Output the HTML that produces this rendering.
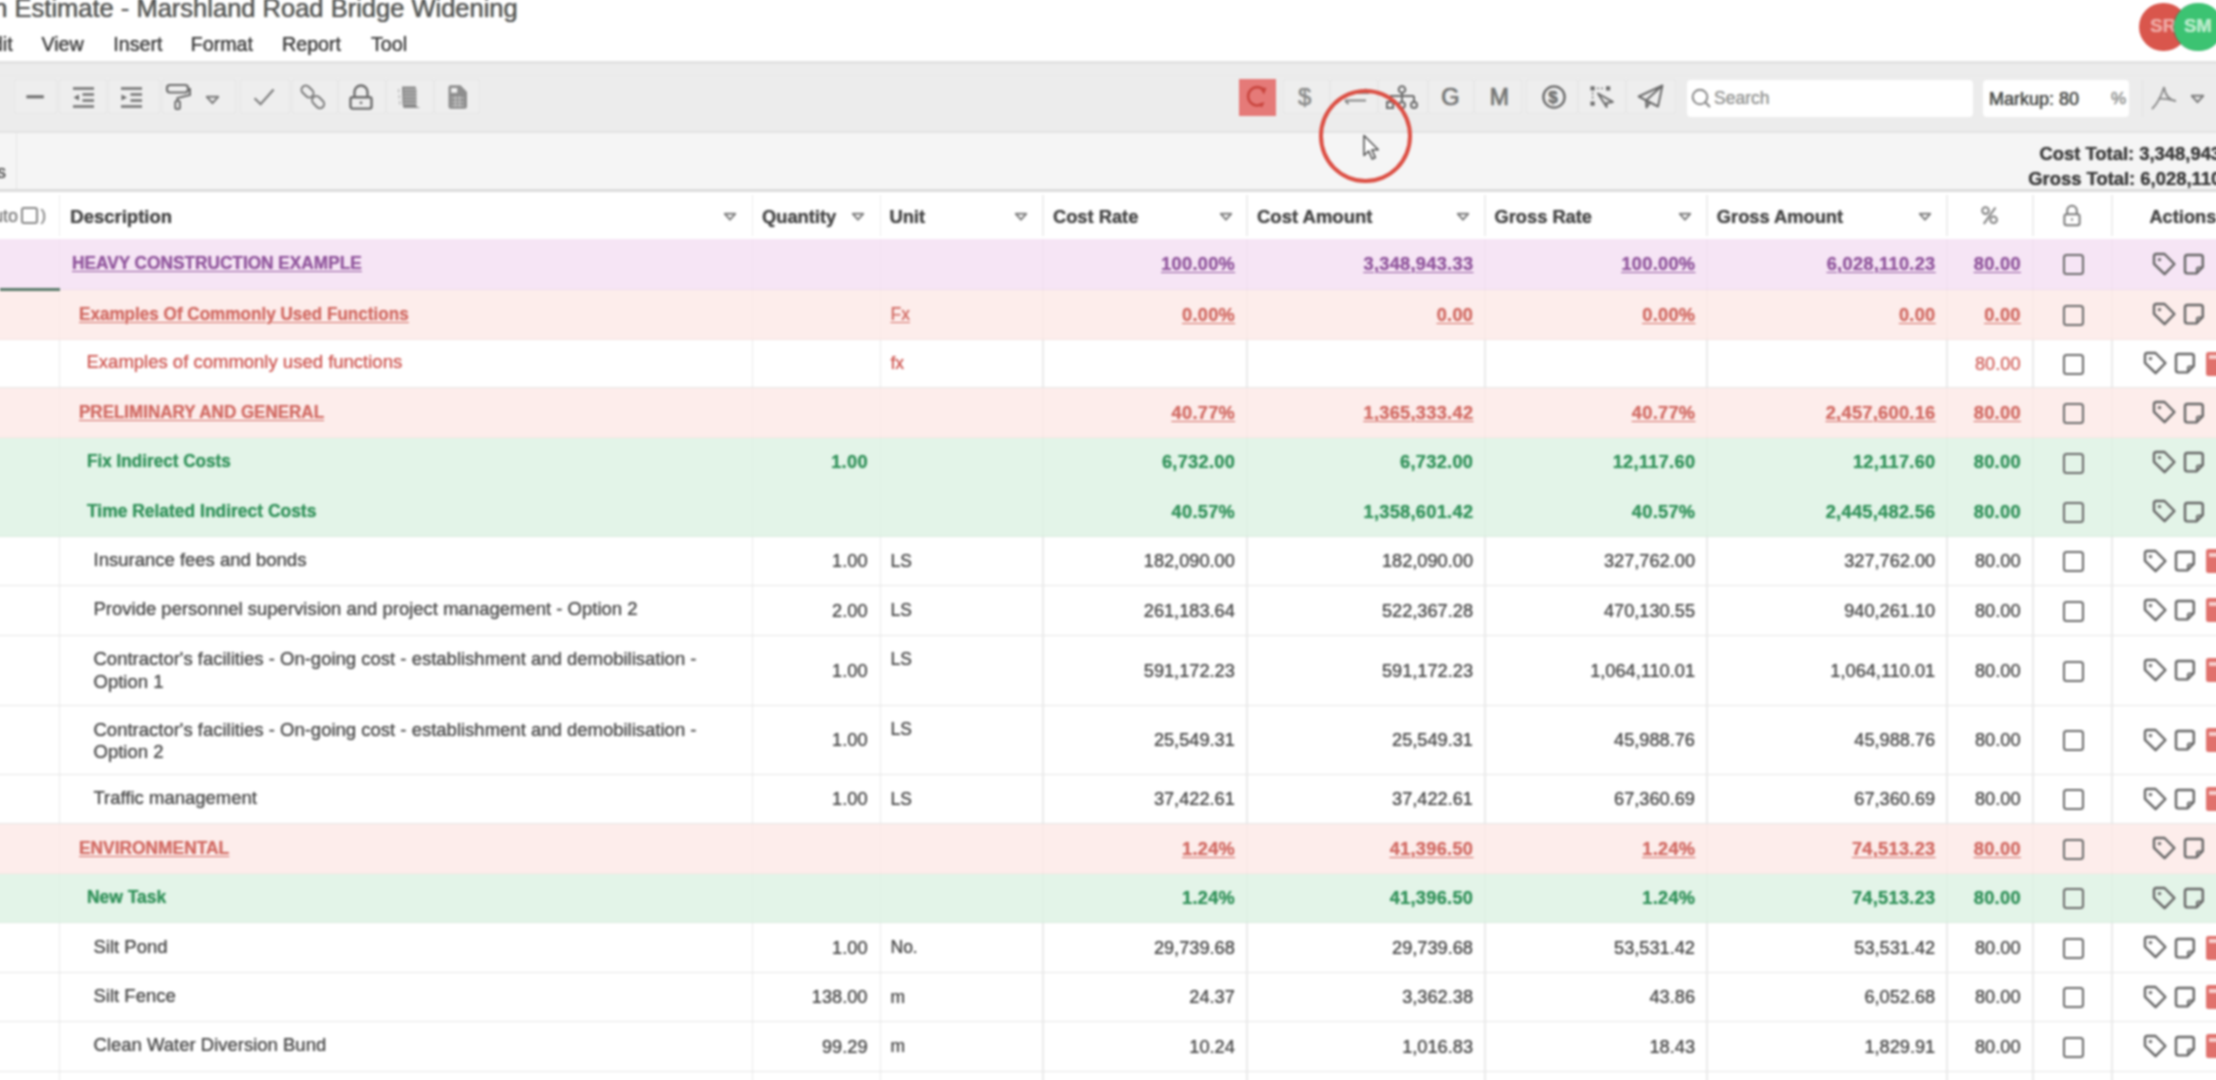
<!DOCTYPE html>
<html><head><meta charset="utf-8"><style>
html,body{margin:0;padding:0;background:#fff}
body{width:2216px;height:1080px;overflow:hidden;position:relative;font-family:"Liberation Sans", sans-serif}
#w{position:absolute;left:-14px;top:-14px;width:2244px;height:1108px;filter:blur(0.8px);background:#fff}
#c{position:absolute;left:14px;top:14px;width:2216px;height:1080px}
.t{position:absolute;white-space:nowrap;line-height:1;text-shadow:0 0 1px currentColor}
.r{position:absolute}
.s{position:absolute;overflow:visible}
</style></head><body><div id="w"><div id="c">
<div class="t" style="left:-6.70px;top:-3.69px;font-size:25.5px;color:#585858;">n Estimate - Marshland Road Bridge Widening</div>
<div class="t" style="left:-1187.40px;width:1200px;text-align:right;top:35.32px;font-size:19.7px;color:#3e3e3e;">Edit</div>
<div class="t" style="left:41.40px;top:35.32px;font-size:19.7px;color:#3e3e3e;">View</div>
<div class="t" style="left:113.30px;top:35.32px;font-size:19.7px;color:#3e3e3e;">Insert</div>
<div class="t" style="left:190.70px;top:35.32px;font-size:19.7px;color:#3e3e3e;">Format</div>
<div class="t" style="left:282.00px;top:35.32px;font-size:19.7px;color:#3e3e3e;">Report</div>
<div class="t" style="left:371.00px;top:35.32px;font-size:19.7px;color:#3e3e3e;">Tool</div>
<div class="r" style="left:2139.3px;top:2.7px;width:48.6px;height:48.6px;border-radius:50%;background:#d9564c"></div>
<div class="t" style="left:2150.30px;top:17.26px;font-size:18.5px;color:#eea9a3;font-weight:bold;">SR</div>
<div class="r" style="left:2174.3px;top:3px;width:48.4px;height:48.4px;border-radius:50%;background:#3cc372;box-shadow:-1px 0 0 rgba(60,60,60,0.35)"></div>
<div class="t" style="left:2183.90px;top:17.26px;font-size:18.5px;color:#b9ebca;font-weight:bold;">SM</div>
<div class="r" style="left:-14.00px;top:61.00px;width:2244.00px;height:72.00px;background:#ececec;"></div>
<div class="r" style="left:-14.00px;top:61.00px;width:2244.00px;height:3.00px;background:#e2e2e2;"></div>
<div class="r" style="left:-14.00px;top:74.50px;width:2244.00px;height:1.00px;background:#e8e8e8;"></div>
<div class="r" style="left:-14.00px;top:131.00px;width:2244.00px;height:2.00px;background:#e3e3e3;"></div>
<div class="r" style="left:-14.00px;top:133.00px;width:2244.00px;height:57.00px;background:#f5f5f5;"></div>
<div class="r" style="left:-14.00px;top:189.00px;width:2244.00px;height:3.00px;background:#dcdcdc;"></div>
<div class="r" style="left:15.50px;top:133.00px;width:1.50px;height:56.00px;background:#e6e6e6;"></div>
<div class="t" style="left:-3.00px;top:163.21px;font-size:18px;color:#555;">s</div>
<div class="t" style="left:2039.50px;top:145.21px;font-size:18.4px;color:#3a3a3a;font-weight:bold;">Cost Total: 3,348,943.33</div>
<div class="t" style="left:2028.30px;top:170.01px;font-size:18.4px;color:#3a3a3a;font-weight:bold;">Gross Total: 6,028,110.23</div>
<div class="r" style="left:14px;top:79px;width:43px;height:34.5px;border:1px solid #e7e7e7;background:#eeeeee;box-sizing:border-box;border-radius:3px"></div>
<div class="r" style="left:59px;top:79px;width:48px;height:34.5px;border:1px solid #e7e7e7;background:#eeeeee;box-sizing:border-box;border-radius:3px"></div>
<div class="r" style="left:108px;top:79px;width:52px;height:34.5px;border:1px solid #e7e7e7;background:#eeeeee;box-sizing:border-box;border-radius:3px"></div>
<div class="r" style="left:162px;top:79px;width:74px;height:34.5px;border:1px solid #e7e7e7;background:#eeeeee;box-sizing:border-box;border-radius:3px"></div>
<div class="r" style="left:240px;top:79px;width:50px;height:34.5px;border:1px solid #e7e7e7;background:#eeeeee;box-sizing:border-box;border-radius:3px"></div>
<div class="r" style="left:292px;top:79px;width:46px;height:34.5px;border:1px solid #e7e7e7;background:#eeeeee;box-sizing:border-box;border-radius:3px"></div>
<div class="r" style="left:338px;top:79px;width:48px;height:34.5px;border:1px solid #e7e7e7;background:#eeeeee;box-sizing:border-box;border-radius:3px"></div>
<div class="r" style="left:386px;top:79px;width:48px;height:34.5px;border:1px solid #e7e7e7;background:#eeeeee;box-sizing:border-box;border-radius:3px"></div>
<div class="r" style="left:434px;top:79px;width:46px;height:34.5px;border:1px solid #e7e7e7;background:#eeeeee;box-sizing:border-box;border-radius:3px"></div>
<div class="r" style="left:1283px;top:79px;width:47px;height:34.5px;border:1px solid #e7e7e7;background:#eeeeee;box-sizing:border-box;border-radius:3px"></div>
<div class="r" style="left:1330px;top:79px;width:48px;height:34.5px;border:1px solid #e7e7e7;background:#eeeeee;box-sizing:border-box;border-radius:3px"></div>
<div class="r" style="left:1378px;top:79px;width:50px;height:34.5px;border:1px solid #e7e7e7;background:#eeeeee;box-sizing:border-box;border-radius:3px"></div>
<div class="r" style="left:1428px;top:79px;width:46px;height:34.5px;border:1px solid #e7e7e7;background:#eeeeee;box-sizing:border-box;border-radius:3px"></div>
<div class="r" style="left:1474px;top:79px;width:48px;height:34.5px;border:1px solid #e7e7e7;background:#eeeeee;box-sizing:border-box;border-radius:3px"></div>
<div class="r" style="left:1526px;top:79px;width:52px;height:34.5px;border:1px solid #e7e7e7;background:#eeeeee;box-sizing:border-box;border-radius:3px"></div>
<div class="r" style="left:1578px;top:79px;width:48px;height:34.5px;border:1px solid #e7e7e7;background:#eeeeee;box-sizing:border-box;border-radius:3px"></div>
<div class="r" style="left:1626px;top:79px;width:50px;height:34.5px;border:1px solid #e7e7e7;background:#eeeeee;box-sizing:border-box;border-radius:3px"></div>
<svg class="s" style="left:20.00px;top:85.00px;" width="30" height="24" viewBox="0 0 30 24"><line x1="6.4" y1="11.8" x2="23.8" y2="11.8" stroke="#6c6c6c" stroke-width="3"/></svg>
<svg class="s" style="left:72.60px;top:85.50px;" width="22" height="23" viewBox="0 0 22 23"><line x1="0" y1="2.5" x2="21" y2="2.5" stroke="#6c6c6c" stroke-width="2.4"/><line x1="9.5" y1="8.5" x2="21" y2="8.5" stroke="#6c6c6c" stroke-width="2.4"/><line x1="9.5" y1="14.5" x2="21" y2="14.5" stroke="#6c6c6c" stroke-width="2.4"/><line x1="0" y1="20.5" x2="21" y2="20.5" stroke="#6c6c6c" stroke-width="2.4"/><path d="M6 8.5 L0.5 11.5 L6 14.5Z" fill="#6c6c6c"/></svg>
<svg class="s" style="left:120.70px;top:85.50px;" width="22" height="23" viewBox="0 0 22 23"><line x1="0" y1="2.5" x2="21" y2="2.5" stroke="#6c6c6c" stroke-width="2.4"/><line x1="9.5" y1="8.5" x2="21" y2="8.5" stroke="#6c6c6c" stroke-width="2.4"/><line x1="9.5" y1="14.5" x2="21" y2="14.5" stroke="#6c6c6c" stroke-width="2.4"/><line x1="0" y1="20.5" x2="21" y2="20.5" stroke="#6c6c6c" stroke-width="2.4"/><path d="M0.5 8.5 L6 11.5 L0.5 14.5Z" fill="#6c6c6c"/></svg>
<svg class="s" style="left:165.00px;top:83.00px;" width="28" height="28" viewBox="0 0 28 28"><rect x="2" y="2" width="21" height="7.5" rx="3" fill="none" stroke="#6c6c6c" stroke-width="2.2"/><path d="M23 6 H25 V12 L12.5 15 V18" fill="none" stroke="#6c6c6c" stroke-width="2"/><rect x="10.3" y="18" width="4.6" height="8" rx="1.5" fill="none" stroke="#6c6c6c" stroke-width="2"/></svg>
<svg class="s" style="left:204.80px;top:95.10px;" width="15" height="10" viewBox="0 0 15 10"><path d="M1.8 1.8 H13.2 L7.5 8.2Z" fill="none" stroke="#7a7a7a" stroke-width="2" stroke-linejoin="round"/></svg>
<svg class="s" style="left:250.00px;top:85.00px;" width="28" height="24" viewBox="0 0 28 24"><path d="M4.6 13.3 L10.6 19.2 L23.6 4.6" fill="none" stroke="#808080" stroke-width="2.3"/></svg>
<svg class="s" style="left:298.00px;top:83.00px;" width="30" height="28" viewBox="0 0 30 28"><g transform="rotate(-45 15 14)"><rect x="10.8" y="-0.5" width="8.4" height="13.5" rx="4.2" fill="none" stroke="#7e7e7e" stroke-width="2.1"/><rect x="10.8" y="14.5" width="8.4" height="13.5" rx="4.2" fill="none" stroke="#7e7e7e" stroke-width="2.1"/></g></svg>
<svg class="s" style="left:348.00px;top:83.00px;" width="26" height="28" viewBox="0 0 26 28"><path d="M6.5 14 V9 A6.5 6.5 0 0 1 19.5 9 V14" fill="none" stroke="#6c6c6c" stroke-width="2.4"/><rect x="2.5" y="14.3" width="21" height="11.3" rx="2" fill="none" stroke="#6c6c6c" stroke-width="2.4"/><circle cx="13" cy="19.8" r="1.4" fill="#6c6c6c"/></svg>
<svg class="s" style="left:395.00px;top:84.00px;" width="28" height="26" viewBox="0 0 28 26"><path d="M7 2.5 H20.5 L21.5 6 V22.5 L25.5 24 H8.5 L7.5 20 Z" fill="#8c8c8c"/><rect x="9" y="5.3" width="13" height="0.9" fill="#d0d0d0"/><rect x="9" y="8.7" width="13" height="0.9" fill="#d0d0d0"/><rect x="9" y="12.1" width="13" height="0.9" fill="#d0d0d0"/><rect x="9" y="15.5" width="13" height="0.9" fill="#d0d0d0"/><rect x="9" y="18.9" width="13" height="0.9" fill="#d0d0d0"/><rect x="3" y="5" width="1.3" height="3.5" fill="#b5b5b5"/><rect x="3.6" y="11" width="1.3" height="3.5" fill="#b5b5b5"/><rect x="4" y="17" width="1.3" height="3.5" fill="#b5b5b5"/></svg>
<svg class="s" style="left:447.00px;top:84.00px;" width="22" height="26" viewBox="0 0 22 26"><path d="M1.5 3.5 Q1.5 1.3 3.7 1.3 H13.5 L20 8 V22.5 Q20 24.8 17.8 24.8 H3.7 Q1.5 24.8 1.5 22.5Z" fill="#8e8e8e"/><rect x="4.2" y="4" width="6" height="4.8" fill="#f0f0f0"/><path d="M4.5 14 H17 M4.5 18 H17 M4.5 21.5 H17 M8.5 12 V23 M12.5 12 V23" stroke="#c8c8c8" stroke-width="1.1"/></svg>
<div class="r" style="left:1239.00px;top:78.80px;width:36.60px;height:37.00px;background:#e57a78;"></div>
<svg class="s" style="left:1244.00px;top:84.00px;" width="28" height="27" viewBox="0 0 28 27"><path d="M19.5 5.5 A9.2 9.2 0 1 0 19 19.5" fill="none" stroke="#c9463f" stroke-width="2.6"/><path d="M15 3 L22.5 4 L20 10.5Z" fill="#c9463f"/><path d="M14 20 L20.5 18 L18 23.5Z" fill="#c9463f"/></svg>
<div class="t" style="left:1298.00px;top:84.78px;font-size:24px;color:#8a8a8a;">$</div>
<svg class="s" style="left:1338.00px;top:84.00px;" width="34" height="26" viewBox="0 0 34 26"><path d="M10 9 H31 M27 5 L31 9" fill="none" stroke="#858585" stroke-width="2"/><path d="M28 16.5 H7 M10.5 20 L7 16.5" fill="none" stroke="#858585" stroke-width="2"/></svg>
<svg class="s" style="left:1385.00px;top:83.00px;" width="34" height="28" viewBox="0 0 34 28"><circle cx="17" cy="6.5" r="3.3" fill="none" stroke="#6c6c6c" stroke-width="2"/><path d="M17 10 V17 M5 13 H29 M5 13 V19 M29 13 V19 M17 13 V19" fill="none" stroke="#6c6c6c" stroke-width="2"/><rect x="2" y="19" width="6" height="6" fill="none" stroke="#6c6c6c" stroke-width="2"/><circle cx="17" cy="22" r="3" fill="none" stroke="#6c6c6c" stroke-width="2"/><circle cx="29" cy="22" r="3" fill="none" stroke="#6c6c6c" stroke-width="2"/></svg>
<div class="t" style="left:1441.30px;top:85.52px;font-size:23.5px;color:#777;-webkit-text-stroke:0.5px #777;">G</div>
<div class="t" style="left:1489.80px;top:85.76px;font-size:23px;color:#777;-webkit-text-stroke:0.5px #777;">M</div>
<svg class="s" style="left:1540.00px;top:83.00px;" width="28" height="28" viewBox="0 0 28 28"><circle cx="14" cy="14" r="10.6" fill="none" stroke="#6c6c6c" stroke-width="2.4"/></svg>
<div class="t" style="left:1548.20px;top:88.50px;font-size:17px;color:#6e6e6e;font-weight:bold;">$</div>
<svg class="s" style="left:1587.00px;top:83.00px;" width="30" height="28" viewBox="0 0 30 28"><rect x="3.5" y="3.3" width="4.2" height="4.2" fill="#6c6c6c"/><rect x="19" y="3.3" width="4.2" height="4.2" fill="#6c6c6c"/><rect x="3.5" y="18.5" width="4.2" height="4.2" fill="#6c6c6c"/><path d="M10 5.4 H17 M5.6 9.5 V16.5" stroke="#6c6c6c" stroke-width="1.3" stroke-dasharray="2 2"/><path d="M11 10.5 L25.8 18.9 L19.5 19.9 L19.6 24 Z" fill="none" stroke="#6c6c6c" stroke-width="2" stroke-linejoin="round"/></svg>
<svg class="s" style="left:1636.00px;top:83.00px;" width="30" height="28" viewBox="0 0 30 28"><path d="M2.7 13.5 L26.4 2.5 L22 23.5 Z M2.7 13.5 L26.4 2.5 L10 17.5 L10.5 24.5 L14 19.5" fill="none" stroke="#6c6c6c" stroke-width="2" stroke-linejoin="round"/></svg>
<div class="r" style="left:1687px;top:79.7px;width:285.7px;height:37.5px;background:#fff;border-radius:4px"></div>
<svg class="s" style="left:1690.00px;top:86.80px;" width="24" height="24" viewBox="0 0 24 24"><circle cx="10" cy="10" r="7.3" fill="none" stroke="#888" stroke-width="2"/><line x1="15.2" y1="15.2" x2="20" y2="20" stroke="#888" stroke-width="2.2"/></svg>
<div class="t" style="left:1714.00px;top:90.25px;font-size:17.5px;color:#9a9a9a;">Search</div>
<div class="r" style="left:1983px;top:79.7px;width:145.7px;height:37.5px;background:#fff;border-radius:4px"></div>
<div class="t" style="left:1989.00px;top:90.01px;font-size:18px;color:#4a4a4a;">Markup: 80</div>
<div class="t" style="left:2111.00px;top:90.20px;font-size:17px;color:#9a9a9a;-webkit-text-stroke:0.3px #9a9a9a;">%</div>
<div class="r" style="left:2141.50px;top:80.00px;width:1.20px;height:37.00px;background:#e2e2e2;"></div>
<svg class="s" style="left:2148.00px;top:84.00px;" width="32" height="28" viewBox="0 0 32 28"><path d="M16 3 C14 10 11 18 4 25 M16 3 C17 10 20 16 28 17 M10 15 C14 14 20 15 27 17" fill="none" stroke="#8a8a8a" stroke-width="1.8"/></svg>
<svg class="s" style="left:2190.10px;top:94.00px;" width="15" height="10" viewBox="0 0 15 10"><path d="M1.8 1.8 H13.2 L7.5 8.2Z" fill="none" stroke="#7a7a7a" stroke-width="2" stroke-linejoin="round"/></svg>
<div class="r" style="left:1319px;top:89px;width:92.5px;height:93.5px;border:4.2px solid #dc4f44;border-radius:50%;box-sizing:border-box"></div>
<svg class="s" style="left:1360.00px;top:132.00px;" width="24" height="32" viewBox="0 0 24 32"><path d="M4 3.5 V23.5 L8.7 19 L12.2 27 L15.3 25.6 L11.9 17.8 L18.3 17.8 Z" fill="#fff" stroke="#555" stroke-width="1.6" stroke-linejoin="round"/></svg>
<div class="r" style="left:-14.00px;top:192.00px;width:2244.00px;height:46.70px;background:#ffffff;"></div>
<div class="r" style="left:58.80px;top:195.00px;width:1.40px;height:40.70px;background:#eeeeee;"></div>
<div class="r" style="left:751.80px;top:195.00px;width:1.40px;height:40.70px;background:#eeeeee;"></div>
<div class="r" style="left:879.80px;top:195.00px;width:1.40px;height:40.70px;background:#eeeeee;"></div>
<div class="r" style="left:1042.30px;top:195.00px;width:1.40px;height:40.70px;background:#eeeeee;"></div>
<div class="r" style="left:1246.30px;top:195.00px;width:1.40px;height:40.70px;background:#eeeeee;"></div>
<div class="r" style="left:1484.30px;top:195.00px;width:1.40px;height:40.70px;background:#eeeeee;"></div>
<div class="r" style="left:1706.30px;top:195.00px;width:1.40px;height:40.70px;background:#eeeeee;"></div>
<div class="r" style="left:1946.30px;top:195.00px;width:1.40px;height:40.70px;background:#eeeeee;"></div>
<div class="r" style="left:2032.30px;top:195.00px;width:1.40px;height:40.70px;background:#eeeeee;"></div>
<div class="r" style="left:2111.30px;top:195.00px;width:1.40px;height:40.70px;background:#eeeeee;"></div>
<div class="t" style="left:70.30px;top:208.36px;font-size:18.5px;color:#474747;font-weight:bold;">Description</div>
<div class="t" style="left:762.00px;top:208.46px;font-size:18.3px;color:#474747;font-weight:bold;">Quantity</div>
<div class="t" style="left:889.50px;top:208.46px;font-size:18.3px;color:#474747;font-weight:bold;">Unit</div>
<div class="t" style="left:1053.00px;top:208.46px;font-size:18.3px;color:#474747;font-weight:bold;">Cost Rate</div>
<div class="t" style="left:1257.00px;top:208.36px;font-size:18.5px;color:#474747;font-weight:bold;">Cost Amount</div>
<div class="t" style="left:1494.50px;top:208.46px;font-size:18.3px;color:#474747;font-weight:bold;">Gross Rate</div>
<div class="t" style="left:1716.80px;top:208.46px;font-size:18.3px;color:#474747;font-weight:bold;">Gross Amount</div>
<div class="t" style="left:2149.40px;top:208.46px;font-size:18.3px;color:#474747;font-weight:bold;">Actions</div>
<svg class="s" style="left:1980.00px;top:205.00px;" width="20" height="21" viewBox="0 0 20 21"><circle cx="5.5" cy="5.6" r="3.3" fill="none" stroke="#858585" stroke-width="2"/><circle cx="13.6" cy="14.8" r="3.3" fill="none" stroke="#858585" stroke-width="2"/><path d="M15.5 2.5 L3.8 18.8" stroke="#858585" stroke-width="2.1"/></svg>
<svg class="s" style="left:723.00px;top:211.85px;" width="14" height="9.5" viewBox="0 0 14 9.5"><path d="M1.8 1.8 H12.2 L7.0 7.7Z" fill="none" stroke="#808080" stroke-width="2" stroke-linejoin="round"/></svg>
<svg class="s" style="left:851.00px;top:211.85px;" width="14" height="9.5" viewBox="0 0 14 9.5"><path d="M1.8 1.8 H12.2 L7.0 7.7Z" fill="none" stroke="#808080" stroke-width="2" stroke-linejoin="round"/></svg>
<svg class="s" style="left:1014.00px;top:211.85px;" width="14" height="9.5" viewBox="0 0 14 9.5"><path d="M1.8 1.8 H12.2 L7.0 7.7Z" fill="none" stroke="#808080" stroke-width="2" stroke-linejoin="round"/></svg>
<svg class="s" style="left:1218.80px;top:211.85px;" width="14" height="9.5" viewBox="0 0 14 9.5"><path d="M1.8 1.8 H12.2 L7.0 7.7Z" fill="none" stroke="#808080" stroke-width="2" stroke-linejoin="round"/></svg>
<svg class="s" style="left:1456.40px;top:211.85px;" width="14" height="9.5" viewBox="0 0 14 9.5"><path d="M1.8 1.8 H12.2 L7.0 7.7Z" fill="none" stroke="#808080" stroke-width="2" stroke-linejoin="round"/></svg>
<svg class="s" style="left:1678.00px;top:211.85px;" width="14" height="9.5" viewBox="0 0 14 9.5"><path d="M1.8 1.8 H12.2 L7.0 7.7Z" fill="none" stroke="#808080" stroke-width="2" stroke-linejoin="round"/></svg>
<svg class="s" style="left:1918.40px;top:211.85px;" width="14" height="9.5" viewBox="0 0 14 9.5"><path d="M1.8 1.8 H12.2 L7.0 7.7Z" fill="none" stroke="#808080" stroke-width="2" stroke-linejoin="round"/></svg>
<svg class="s" style="left:2062.00px;top:203.00px;" width="20" height="24" viewBox="0 0 20 24"><path d="M5.2 11 V7.5 A4.8 4.8 0 0 1 14.8 7.5 V11" fill="none" stroke="#7a7a7a" stroke-width="2"/><rect x="2.4" y="11.2" width="15.2" height="11" rx="2.2" fill="none" stroke="#7a7a7a" stroke-width="2"/><rect x="9" y="15.5" width="2" height="2" fill="#7a7a7a"/></svg>
<div class="t" style="left:-1182.00px;width:1200px;text-align:right;top:206.71px;font-size:18px;color:#808080;">uto</div>
<div class="r" style="left:21.4px;top:206.7px;width:16.5px;height:17px;border:2px solid #888;border-radius:3px;box-sizing:border-box"></div>
<div class="t" style="left:40.50px;top:207.20px;font-size:17px;color:#888;">)</div>
<div class="r" style="left:-14.00px;top:238.70px;width:2244.00px;height:51.30px;background:#f6e5f5;"></div>
<div class="r" style="left:-14.00px;top:289.00px;width:2244.00px;height:2.00px;background:rgba(0,0,0,0.03);"></div>
<div class="r" style="left:58.90px;top:238.70px;width:1.20px;height:51.30px;background:rgba(0,0,0,0.015);"></div>
<div class="r" style="left:751.90px;top:238.70px;width:1.20px;height:51.30px;background:rgba(0,0,0,0.015);"></div>
<div class="r" style="left:879.90px;top:238.70px;width:1.20px;height:51.30px;background:rgba(0,0,0,0.015);"></div>
<div class="r" style="left:1042.40px;top:238.70px;width:1.20px;height:51.30px;background:rgba(0,0,0,0.015);"></div>
<div class="r" style="left:1246.40px;top:238.70px;width:1.20px;height:51.30px;background:rgba(0,0,0,0.015);"></div>
<div class="r" style="left:1484.40px;top:238.70px;width:1.20px;height:51.30px;background:rgba(0,0,0,0.015);"></div>
<div class="r" style="left:1706.40px;top:238.70px;width:1.20px;height:51.30px;background:rgba(0,0,0,0.015);"></div>
<div class="r" style="left:1946.40px;top:238.70px;width:1.20px;height:51.30px;background:rgba(0,0,0,0.015);"></div>
<div class="r" style="left:2032.40px;top:238.70px;width:1.20px;height:51.30px;background:rgba(0,0,0,0.015);"></div>
<div class="r" style="left:2111.40px;top:238.70px;width:1.20px;height:51.30px;background:rgba(0,0,0,0.015);"></div>
<div class="t" style="left:72.40px;top:254.11px;font-size:18.3px;color:#92589e;font-weight:bold;text-decoration:underline;text-underline-offset:2.3px;text-decoration-thickness:1.2px;transform:scaleX(0.9434);transform-origin:0 50%;">HEAVY CONSTRUCTION EXAMPLE</div>
<div class="t" style="left:35.10px;width:1200px;text-align:right;top:255.16px;font-size:18.2px;color:#92589e;font-weight:bold;text-decoration:underline;text-underline-offset:2.3px;text-decoration-thickness:1.2px;letter-spacing:0.3px;">100.00%</div>
<div class="t" style="left:273.30px;width:1200px;text-align:right;top:255.16px;font-size:18.2px;color:#92589e;font-weight:bold;text-decoration:underline;text-underline-offset:2.3px;text-decoration-thickness:1.2px;letter-spacing:0.3px;">3,348,943.33</div>
<div class="t" style="left:495.30px;width:1200px;text-align:right;top:255.16px;font-size:18.2px;color:#92589e;font-weight:bold;text-decoration:underline;text-underline-offset:2.3px;text-decoration-thickness:1.2px;letter-spacing:0.3px;">100.00%</div>
<div class="t" style="left:735.50px;width:1200px;text-align:right;top:255.16px;font-size:18.2px;color:#92589e;font-weight:bold;text-decoration:underline;text-underline-offset:2.3px;text-decoration-thickness:1.2px;letter-spacing:0.3px;">6,028,110.23</div>
<div class="t" style="left:820.80px;width:1200px;text-align:right;top:255.16px;font-size:18.2px;color:#92589e;font-weight:bold;text-decoration:underline;text-underline-offset:2.3px;text-decoration-thickness:1.2px;letter-spacing:0.3px;">80.00</div>
<div class="r" style="left:2062.6px;top:254.25px;width:21px;height:21px;border:2.3px solid #6a6a6a;border-radius:3.5px;box-sizing:border-box"></div>
<svg class="s" style="left:2151.00px;top:251.55px;" width="26" height="25" viewBox="0 0 26 25"><path d="M3 4.2 Q3 2 5.2 2 H13.5 L23.4 12 L13.6 22.2 L3 11.8 Z" fill="none" stroke="#666" stroke-width="2.4" stroke-linejoin="round"/><circle cx="8.5" cy="7.6" r="1.7" fill="#666"/></svg>
<svg class="s" style="left:2183.00px;top:252.85px;" width="22" height="23" viewBox="0 0 22 23"><path d="M4.3 2 H17.5 Q19.8 2 19.8 4.3 V14 L13.5 20.4 H4.3 Q2 20.4 2 18.1 V4.3 Q2 2 4.3 2 Z" fill="none" stroke="#666" stroke-width="2.4" stroke-linejoin="round"/><path d="M13.8 20 V16 Q13.8 14.3 15.5 14.3 H19.5" fill="none" stroke="#666" stroke-width="1.8"/></svg>
<div class="r" style="left:-14.00px;top:290.00px;width:2244.00px;height:49.60px;background:#fdedeb;"></div>
<div class="r" style="left:-14.00px;top:338.60px;width:2244.00px;height:2.00px;background:rgba(0,0,0,0.03);"></div>
<div class="r" style="left:58.90px;top:290.00px;width:1.20px;height:49.60px;background:rgba(0,0,0,0.015);"></div>
<div class="r" style="left:751.90px;top:290.00px;width:1.20px;height:49.60px;background:rgba(0,0,0,0.015);"></div>
<div class="r" style="left:879.90px;top:290.00px;width:1.20px;height:49.60px;background:rgba(0,0,0,0.015);"></div>
<div class="r" style="left:1042.40px;top:290.00px;width:1.20px;height:49.60px;background:rgba(0,0,0,0.015);"></div>
<div class="r" style="left:1246.40px;top:290.00px;width:1.20px;height:49.60px;background:rgba(0,0,0,0.015);"></div>
<div class="r" style="left:1484.40px;top:290.00px;width:1.20px;height:49.60px;background:rgba(0,0,0,0.015);"></div>
<div class="r" style="left:1706.40px;top:290.00px;width:1.20px;height:49.60px;background:rgba(0,0,0,0.015);"></div>
<div class="r" style="left:1946.40px;top:290.00px;width:1.20px;height:49.60px;background:rgba(0,0,0,0.015);"></div>
<div class="r" style="left:2032.40px;top:290.00px;width:1.20px;height:49.60px;background:rgba(0,0,0,0.015);"></div>
<div class="r" style="left:2111.40px;top:290.00px;width:1.20px;height:49.60px;background:rgba(0,0,0,0.015);"></div>
<div class="t" style="left:79.40px;top:304.56px;font-size:18.3px;color:#d26d66;font-weight:bold;text-decoration:underline;text-underline-offset:2.3px;text-decoration-thickness:1.2px;transform:scaleX(0.9352);transform-origin:0 50%;">Examples Of Commonly Used Functions</div>
<div class="t" style="left:890.50px;top:305.95px;font-size:17.5px;color:#d26d66;text-decoration:underline;text-underline-offset:2px;text-decoration-thickness:1px;text-decoration-color:rgba(217,109,102,0.35);">Fx</div>
<div class="t" style="left:35.10px;width:1200px;text-align:right;top:305.61px;font-size:18.2px;color:#d26d66;font-weight:bold;text-decoration:underline;text-underline-offset:2.3px;text-decoration-thickness:1.2px;letter-spacing:0.3px;">0.00%</div>
<div class="t" style="left:273.30px;width:1200px;text-align:right;top:305.61px;font-size:18.2px;color:#d26d66;font-weight:bold;text-decoration:underline;text-underline-offset:2.3px;text-decoration-thickness:1.2px;letter-spacing:0.3px;">0.00</div>
<div class="t" style="left:495.30px;width:1200px;text-align:right;top:305.61px;font-size:18.2px;color:#d26d66;font-weight:bold;text-decoration:underline;text-underline-offset:2.3px;text-decoration-thickness:1.2px;letter-spacing:0.3px;">0.00%</div>
<div class="t" style="left:735.50px;width:1200px;text-align:right;top:305.61px;font-size:18.2px;color:#d26d66;font-weight:bold;text-decoration:underline;text-underline-offset:2.3px;text-decoration-thickness:1.2px;letter-spacing:0.3px;">0.00</div>
<div class="t" style="left:820.80px;width:1200px;text-align:right;top:305.61px;font-size:18.2px;color:#d26d66;font-weight:bold;text-decoration:underline;text-underline-offset:2.3px;text-decoration-thickness:1.2px;letter-spacing:0.3px;">0.00</div>
<div class="r" style="left:2062.6px;top:304.70px;width:21px;height:21px;border:2.3px solid #6a6a6a;border-radius:3.5px;box-sizing:border-box"></div>
<svg class="s" style="left:2151.00px;top:302.00px;" width="26" height="25" viewBox="0 0 26 25"><path d="M3 4.2 Q3 2 5.2 2 H13.5 L23.4 12 L13.6 22.2 L3 11.8 Z" fill="none" stroke="#666" stroke-width="2.4" stroke-linejoin="round"/><circle cx="8.5" cy="7.6" r="1.7" fill="#666"/></svg>
<svg class="s" style="left:2183.00px;top:303.30px;" width="22" height="23" viewBox="0 0 22 23"><path d="M4.3 2 H17.5 Q19.8 2 19.8 4.3 V14 L13.5 20.4 H4.3 Q2 20.4 2 18.1 V4.3 Q2 2 4.3 2 Z" fill="none" stroke="#666" stroke-width="2.4" stroke-linejoin="round"/><path d="M13.8 20 V16 Q13.8 14.3 15.5 14.3 H19.5" fill="none" stroke="#666" stroke-width="1.8"/></svg>
<div class="r" style="left:-14.00px;top:339.60px;width:2244.00px;height:48.40px;background:#ffffff;"></div>
<div class="r" style="left:58.80px;top:339.60px;width:1.40px;height:48.40px;background:#ebebeb;"></div>
<div class="r" style="left:751.80px;top:339.60px;width:1.40px;height:48.40px;background:#ebebeb;"></div>
<div class="r" style="left:879.80px;top:339.60px;width:1.40px;height:48.40px;background:#ebebeb;"></div>
<div class="r" style="left:1042.30px;top:339.60px;width:1.40px;height:48.40px;background:#ebebeb;"></div>
<div class="r" style="left:1246.30px;top:339.60px;width:1.40px;height:48.40px;background:#ebebeb;"></div>
<div class="r" style="left:1484.30px;top:339.60px;width:1.40px;height:48.40px;background:#ebebeb;"></div>
<div class="r" style="left:1706.30px;top:339.60px;width:1.40px;height:48.40px;background:#ebebeb;"></div>
<div class="r" style="left:1946.30px;top:339.60px;width:1.40px;height:48.40px;background:#ebebeb;"></div>
<div class="r" style="left:2032.30px;top:339.60px;width:1.40px;height:48.40px;background:#ebebeb;"></div>
<div class="r" style="left:2111.30px;top:339.60px;width:1.40px;height:48.40px;background:#ebebeb;"></div>
<div class="r" style="left:-14.00px;top:387.20px;width:2244.00px;height:1.60px;background:#e6e6e6;"></div>
<div class="t" style="left:86.50px;top:353.46px;font-size:18.5px;color:#d05d58;">Examples of commonly used functions</div>
<div class="t" style="left:890.50px;top:354.95px;font-size:17.5px;color:#d05d58;">fx</div>
<div class="t" style="left:820.50px;width:1200px;text-align:right;top:354.61px;font-size:18.2px;color:#d46b66;">80.00</div>
<div class="r" style="left:2062.6px;top:353.70px;width:21px;height:21px;border:2.3px solid #6a6a6a;border-radius:3.5px;box-sizing:border-box"></div>
<svg class="s" style="left:2142.00px;top:351.00px;" width="26" height="25" viewBox="0 0 26 25"><path d="M3 4.2 Q3 2 5.2 2 H13.5 L23.4 12 L13.6 22.2 L3 11.8 Z" fill="none" stroke="#666" stroke-width="2.4" stroke-linejoin="round"/><circle cx="8.5" cy="7.6" r="1.7" fill="#666"/></svg>
<svg class="s" style="left:2174.00px;top:352.30px;" width="22" height="23" viewBox="0 0 22 23"><path d="M4.3 2 H17.5 Q19.8 2 19.8 4.3 V14 L13.5 20.4 H4.3 Q2 20.4 2 18.1 V4.3 Q2 2 4.3 2 Z" fill="none" stroke="#666" stroke-width="2.4" stroke-linejoin="round"/><path d="M13.8 20 V16 Q13.8 14.3 15.5 14.3 H19.5" fill="none" stroke="#666" stroke-width="1.8"/></svg>
<div class="r" style="left:2205.8px;top:351.50px;width:16px;height:24px;background:#e0716c;border-radius:2.5px"></div>
<div class="r" style="left:2209px;top:355.00px;width:10px;height:4px;background:#f6d0ce"></div>
<div class="r" style="left:-14.00px;top:388.00px;width:2244.00px;height:50.00px;background:#fdedeb;"></div>
<div class="r" style="left:-14.00px;top:437.00px;width:2244.00px;height:2.00px;background:rgba(0,0,0,0.03);"></div>
<div class="r" style="left:58.90px;top:388.00px;width:1.20px;height:50.00px;background:rgba(0,0,0,0.015);"></div>
<div class="r" style="left:751.90px;top:388.00px;width:1.20px;height:50.00px;background:rgba(0,0,0,0.015);"></div>
<div class="r" style="left:879.90px;top:388.00px;width:1.20px;height:50.00px;background:rgba(0,0,0,0.015);"></div>
<div class="r" style="left:1042.40px;top:388.00px;width:1.20px;height:50.00px;background:rgba(0,0,0,0.015);"></div>
<div class="r" style="left:1246.40px;top:388.00px;width:1.20px;height:50.00px;background:rgba(0,0,0,0.015);"></div>
<div class="r" style="left:1484.40px;top:388.00px;width:1.20px;height:50.00px;background:rgba(0,0,0,0.015);"></div>
<div class="r" style="left:1706.40px;top:388.00px;width:1.20px;height:50.00px;background:rgba(0,0,0,0.015);"></div>
<div class="r" style="left:1946.40px;top:388.00px;width:1.20px;height:50.00px;background:rgba(0,0,0,0.015);"></div>
<div class="r" style="left:2032.40px;top:388.00px;width:1.20px;height:50.00px;background:rgba(0,0,0,0.015);"></div>
<div class="r" style="left:2111.40px;top:388.00px;width:1.20px;height:50.00px;background:rgba(0,0,0,0.015);"></div>
<div class="t" style="left:79.40px;top:402.76px;font-size:18.3px;color:#d26d66;font-weight:bold;text-decoration:underline;text-underline-offset:2.3px;text-decoration-thickness:1.2px;transform:scaleX(0.9303);transform-origin:0 50%;">PRELIMINARY AND GENERAL</div>
<div class="t" style="left:35.10px;width:1200px;text-align:right;top:403.81px;font-size:18.2px;color:#d26d66;font-weight:bold;text-decoration:underline;text-underline-offset:2.3px;text-decoration-thickness:1.2px;letter-spacing:0.3px;">40.77%</div>
<div class="t" style="left:273.30px;width:1200px;text-align:right;top:403.81px;font-size:18.2px;color:#d26d66;font-weight:bold;text-decoration:underline;text-underline-offset:2.3px;text-decoration-thickness:1.2px;letter-spacing:0.3px;">1,365,333.42</div>
<div class="t" style="left:495.30px;width:1200px;text-align:right;top:403.81px;font-size:18.2px;color:#d26d66;font-weight:bold;text-decoration:underline;text-underline-offset:2.3px;text-decoration-thickness:1.2px;letter-spacing:0.3px;">40.77%</div>
<div class="t" style="left:735.50px;width:1200px;text-align:right;top:403.81px;font-size:18.2px;color:#d26d66;font-weight:bold;text-decoration:underline;text-underline-offset:2.3px;text-decoration-thickness:1.2px;letter-spacing:0.3px;">2,457,600.16</div>
<div class="t" style="left:820.80px;width:1200px;text-align:right;top:403.81px;font-size:18.2px;color:#d26d66;font-weight:bold;text-decoration:underline;text-underline-offset:2.3px;text-decoration-thickness:1.2px;letter-spacing:0.3px;">80.00</div>
<div class="r" style="left:2062.6px;top:402.90px;width:21px;height:21px;border:2.3px solid #6a6a6a;border-radius:3.5px;box-sizing:border-box"></div>
<svg class="s" style="left:2151.00px;top:400.20px;" width="26" height="25" viewBox="0 0 26 25"><path d="M3 4.2 Q3 2 5.2 2 H13.5 L23.4 12 L13.6 22.2 L3 11.8 Z" fill="none" stroke="#666" stroke-width="2.4" stroke-linejoin="round"/><circle cx="8.5" cy="7.6" r="1.7" fill="#666"/></svg>
<svg class="s" style="left:2183.00px;top:401.50px;" width="22" height="23" viewBox="0 0 22 23"><path d="M4.3 2 H17.5 Q19.8 2 19.8 4.3 V14 L13.5 20.4 H4.3 Q2 20.4 2 18.1 V4.3 Q2 2 4.3 2 Z" fill="none" stroke="#666" stroke-width="2.4" stroke-linejoin="round"/><path d="M13.8 20 V16 Q13.8 14.3 15.5 14.3 H19.5" fill="none" stroke="#666" stroke-width="1.8"/></svg>
<div class="r" style="left:-14.00px;top:438.00px;width:2244.00px;height:49.30px;background:#e3f4e8;"></div>
<div class="r" style="left:58.90px;top:438.00px;width:1.20px;height:49.30px;background:rgba(0,0,0,0.015);"></div>
<div class="r" style="left:751.90px;top:438.00px;width:1.20px;height:49.30px;background:rgba(0,0,0,0.015);"></div>
<div class="r" style="left:879.90px;top:438.00px;width:1.20px;height:49.30px;background:rgba(0,0,0,0.015);"></div>
<div class="r" style="left:1042.40px;top:438.00px;width:1.20px;height:49.30px;background:rgba(0,0,0,0.015);"></div>
<div class="r" style="left:1246.40px;top:438.00px;width:1.20px;height:49.30px;background:rgba(0,0,0,0.015);"></div>
<div class="r" style="left:1484.40px;top:438.00px;width:1.20px;height:49.30px;background:rgba(0,0,0,0.015);"></div>
<div class="r" style="left:1706.40px;top:438.00px;width:1.20px;height:49.30px;background:rgba(0,0,0,0.015);"></div>
<div class="r" style="left:1946.40px;top:438.00px;width:1.20px;height:49.30px;background:rgba(0,0,0,0.015);"></div>
<div class="r" style="left:2032.40px;top:438.00px;width:1.20px;height:49.30px;background:rgba(0,0,0,0.015);"></div>
<div class="r" style="left:2111.40px;top:438.00px;width:1.20px;height:49.30px;background:rgba(0,0,0,0.015);"></div>
<div class="t" style="left:86.50px;top:452.41px;font-size:18.3px;color:#34935c;font-weight:bold;transform:scaleX(0.9378);transform-origin:0 50%;">Fix Indirect Costs</div>
<div class="t" style="left:-332.20px;width:1200px;text-align:right;top:453.46px;font-size:18.2px;color:#34935c;font-weight:bold;letter-spacing:0.3px;">1.00</div>
<div class="t" style="left:35.10px;width:1200px;text-align:right;top:453.46px;font-size:18.2px;color:#34935c;font-weight:bold;letter-spacing:0.3px;">6,732.00</div>
<div class="t" style="left:273.30px;width:1200px;text-align:right;top:453.46px;font-size:18.2px;color:#34935c;font-weight:bold;letter-spacing:0.3px;">6,732.00</div>
<div class="t" style="left:495.30px;width:1200px;text-align:right;top:453.46px;font-size:18.2px;color:#34935c;font-weight:bold;letter-spacing:0.3px;">12,117.60</div>
<div class="t" style="left:735.50px;width:1200px;text-align:right;top:453.46px;font-size:18.2px;color:#34935c;font-weight:bold;letter-spacing:0.3px;">12,117.60</div>
<div class="t" style="left:820.80px;width:1200px;text-align:right;top:453.46px;font-size:18.2px;color:#34935c;font-weight:bold;letter-spacing:0.3px;">80.00</div>
<div class="r" style="left:2062.6px;top:452.55px;width:21px;height:21px;border:2.3px solid #6a6a6a;border-radius:3.5px;box-sizing:border-box"></div>
<svg class="s" style="left:2151.00px;top:449.85px;" width="26" height="25" viewBox="0 0 26 25"><path d="M3 4.2 Q3 2 5.2 2 H13.5 L23.4 12 L13.6 22.2 L3 11.8 Z" fill="none" stroke="#666" stroke-width="2.4" stroke-linejoin="round"/><circle cx="8.5" cy="7.6" r="1.7" fill="#666"/></svg>
<svg class="s" style="left:2183.00px;top:451.15px;" width="22" height="23" viewBox="0 0 22 23"><path d="M4.3 2 H17.5 Q19.8 2 19.8 4.3 V14 L13.5 20.4 H4.3 Q2 20.4 2 18.1 V4.3 Q2 2 4.3 2 Z" fill="none" stroke="#666" stroke-width="2.4" stroke-linejoin="round"/><path d="M13.8 20 V16 Q13.8 14.3 15.5 14.3 H19.5" fill="none" stroke="#666" stroke-width="1.8"/></svg>
<div class="r" style="left:-14.00px;top:487.30px;width:2244.00px;height:49.70px;background:#e3f4e8;"></div>
<div class="r" style="left:-14.00px;top:536.00px;width:2244.00px;height:2.00px;background:rgba(0,0,0,0.03);"></div>
<div class="r" style="left:58.90px;top:487.30px;width:1.20px;height:49.70px;background:rgba(0,0,0,0.015);"></div>
<div class="r" style="left:751.90px;top:487.30px;width:1.20px;height:49.70px;background:rgba(0,0,0,0.015);"></div>
<div class="r" style="left:879.90px;top:487.30px;width:1.20px;height:49.70px;background:rgba(0,0,0,0.015);"></div>
<div class="r" style="left:1042.40px;top:487.30px;width:1.20px;height:49.70px;background:rgba(0,0,0,0.015);"></div>
<div class="r" style="left:1246.40px;top:487.30px;width:1.20px;height:49.70px;background:rgba(0,0,0,0.015);"></div>
<div class="r" style="left:1484.40px;top:487.30px;width:1.20px;height:49.70px;background:rgba(0,0,0,0.015);"></div>
<div class="r" style="left:1706.40px;top:487.30px;width:1.20px;height:49.70px;background:rgba(0,0,0,0.015);"></div>
<div class="r" style="left:1946.40px;top:487.30px;width:1.20px;height:49.70px;background:rgba(0,0,0,0.015);"></div>
<div class="r" style="left:2032.40px;top:487.30px;width:1.20px;height:49.70px;background:rgba(0,0,0,0.015);"></div>
<div class="r" style="left:2111.40px;top:487.30px;width:1.20px;height:49.70px;background:rgba(0,0,0,0.015);"></div>
<div class="t" style="left:86.50px;top:501.91px;font-size:18.3px;color:#34935c;font-weight:bold;transform:scaleX(0.9539);transform-origin:0 50%;">Time Related Indirect Costs</div>
<div class="t" style="left:35.10px;width:1200px;text-align:right;top:502.96px;font-size:18.2px;color:#34935c;font-weight:bold;letter-spacing:0.3px;">40.57%</div>
<div class="t" style="left:273.30px;width:1200px;text-align:right;top:502.96px;font-size:18.2px;color:#34935c;font-weight:bold;letter-spacing:0.3px;">1,358,601.42</div>
<div class="t" style="left:495.30px;width:1200px;text-align:right;top:502.96px;font-size:18.2px;color:#34935c;font-weight:bold;letter-spacing:0.3px;">40.57%</div>
<div class="t" style="left:735.50px;width:1200px;text-align:right;top:502.96px;font-size:18.2px;color:#34935c;font-weight:bold;letter-spacing:0.3px;">2,445,482.56</div>
<div class="t" style="left:820.80px;width:1200px;text-align:right;top:502.96px;font-size:18.2px;color:#34935c;font-weight:bold;letter-spacing:0.3px;">80.00</div>
<div class="r" style="left:2062.6px;top:502.05px;width:21px;height:21px;border:2.3px solid #6a6a6a;border-radius:3.5px;box-sizing:border-box"></div>
<svg class="s" style="left:2151.00px;top:499.35px;" width="26" height="25" viewBox="0 0 26 25"><path d="M3 4.2 Q3 2 5.2 2 H13.5 L23.4 12 L13.6 22.2 L3 11.8 Z" fill="none" stroke="#666" stroke-width="2.4" stroke-linejoin="round"/><circle cx="8.5" cy="7.6" r="1.7" fill="#666"/></svg>
<svg class="s" style="left:2183.00px;top:500.65px;" width="22" height="23" viewBox="0 0 22 23"><path d="M4.3 2 H17.5 Q19.8 2 19.8 4.3 V14 L13.5 20.4 H4.3 Q2 20.4 2 18.1 V4.3 Q2 2 4.3 2 Z" fill="none" stroke="#666" stroke-width="2.4" stroke-linejoin="round"/><path d="M13.8 20 V16 Q13.8 14.3 15.5 14.3 H19.5" fill="none" stroke="#666" stroke-width="1.8"/></svg>
<div class="r" style="left:-14.00px;top:537.00px;width:2244.00px;height:49.00px;background:#ffffff;"></div>
<div class="r" style="left:58.80px;top:537.00px;width:1.40px;height:49.00px;background:#ebebeb;"></div>
<div class="r" style="left:751.80px;top:537.00px;width:1.40px;height:49.00px;background:#ebebeb;"></div>
<div class="r" style="left:879.80px;top:537.00px;width:1.40px;height:49.00px;background:#ebebeb;"></div>
<div class="r" style="left:1042.30px;top:537.00px;width:1.40px;height:49.00px;background:#ebebeb;"></div>
<div class="r" style="left:1246.30px;top:537.00px;width:1.40px;height:49.00px;background:#ebebeb;"></div>
<div class="r" style="left:1484.30px;top:537.00px;width:1.40px;height:49.00px;background:#ebebeb;"></div>
<div class="r" style="left:1706.30px;top:537.00px;width:1.40px;height:49.00px;background:#ebebeb;"></div>
<div class="r" style="left:1946.30px;top:537.00px;width:1.40px;height:49.00px;background:#ebebeb;"></div>
<div class="r" style="left:2032.30px;top:537.00px;width:1.40px;height:49.00px;background:#ebebeb;"></div>
<div class="r" style="left:2111.30px;top:537.00px;width:1.40px;height:49.00px;background:#ebebeb;"></div>
<div class="r" style="left:-14.00px;top:585.20px;width:2244.00px;height:1.60px;background:#e6e6e6;"></div>
<div class="t" style="left:93.50px;top:551.16px;font-size:18.5px;color:#4f4f4f;">Insurance fees and bonds</div>
<div class="t" style="left:-332.50px;width:1200px;text-align:right;top:552.31px;font-size:18.2px;color:#4f4f4f;">1.00</div>
<div class="t" style="left:890.50px;top:552.65px;font-size:17.5px;color:#4f4f4f;">LS</div>
<div class="t" style="left:34.80px;width:1200px;text-align:right;top:552.31px;font-size:18.2px;color:#4f4f4f;">182,090.00</div>
<div class="t" style="left:273.00px;width:1200px;text-align:right;top:552.31px;font-size:18.2px;color:#4f4f4f;">182,090.00</div>
<div class="t" style="left:495.00px;width:1200px;text-align:right;top:552.31px;font-size:18.2px;color:#4f4f4f;">327,762.00</div>
<div class="t" style="left:735.20px;width:1200px;text-align:right;top:552.31px;font-size:18.2px;color:#4f4f4f;">327,762.00</div>
<div class="t" style="left:820.50px;width:1200px;text-align:right;top:552.31px;font-size:18.2px;color:#4f4f4f;">80.00</div>
<div class="r" style="left:2062.6px;top:551.40px;width:21px;height:21px;border:2.3px solid #6a6a6a;border-radius:3.5px;box-sizing:border-box"></div>
<svg class="s" style="left:2142.00px;top:548.70px;" width="26" height="25" viewBox="0 0 26 25"><path d="M3 4.2 Q3 2 5.2 2 H13.5 L23.4 12 L13.6 22.2 L3 11.8 Z" fill="none" stroke="#666" stroke-width="2.4" stroke-linejoin="round"/><circle cx="8.5" cy="7.6" r="1.7" fill="#666"/></svg>
<svg class="s" style="left:2174.00px;top:550.00px;" width="22" height="23" viewBox="0 0 22 23"><path d="M4.3 2 H17.5 Q19.8 2 19.8 4.3 V14 L13.5 20.4 H4.3 Q2 20.4 2 18.1 V4.3 Q2 2 4.3 2 Z" fill="none" stroke="#666" stroke-width="2.4" stroke-linejoin="round"/><path d="M13.8 20 V16 Q13.8 14.3 15.5 14.3 H19.5" fill="none" stroke="#666" stroke-width="1.8"/></svg>
<div class="r" style="left:2205.8px;top:549.20px;width:16px;height:24px;background:#e0716c;border-radius:2.5px"></div>
<div class="r" style="left:2209px;top:552.70px;width:10px;height:4px;background:#f6d0ce"></div>
<div class="r" style="left:-14.00px;top:586.00px;width:2244.00px;height:49.50px;background:#ffffff;"></div>
<div class="r" style="left:58.80px;top:586.00px;width:1.40px;height:49.50px;background:#ebebeb;"></div>
<div class="r" style="left:751.80px;top:586.00px;width:1.40px;height:49.50px;background:#ebebeb;"></div>
<div class="r" style="left:879.80px;top:586.00px;width:1.40px;height:49.50px;background:#ebebeb;"></div>
<div class="r" style="left:1042.30px;top:586.00px;width:1.40px;height:49.50px;background:#ebebeb;"></div>
<div class="r" style="left:1246.30px;top:586.00px;width:1.40px;height:49.50px;background:#ebebeb;"></div>
<div class="r" style="left:1484.30px;top:586.00px;width:1.40px;height:49.50px;background:#ebebeb;"></div>
<div class="r" style="left:1706.30px;top:586.00px;width:1.40px;height:49.50px;background:#ebebeb;"></div>
<div class="r" style="left:1946.30px;top:586.00px;width:1.40px;height:49.50px;background:#ebebeb;"></div>
<div class="r" style="left:2032.30px;top:586.00px;width:1.40px;height:49.50px;background:#ebebeb;"></div>
<div class="r" style="left:2111.30px;top:586.00px;width:1.40px;height:49.50px;background:#ebebeb;"></div>
<div class="r" style="left:-14.00px;top:634.70px;width:2244.00px;height:1.60px;background:#e6e6e6;"></div>
<div class="t" style="left:93.50px;top:600.41px;font-size:18.5px;color:#4f4f4f;">Provide personnel supervision and project management - Option 2</div>
<div class="t" style="left:-332.50px;width:1200px;text-align:right;top:601.56px;font-size:18.2px;color:#4f4f4f;">2.00</div>
<div class="t" style="left:890.50px;top:601.90px;font-size:17.5px;color:#4f4f4f;">LS</div>
<div class="t" style="left:34.80px;width:1200px;text-align:right;top:601.56px;font-size:18.2px;color:#4f4f4f;">261,183.64</div>
<div class="t" style="left:273.00px;width:1200px;text-align:right;top:601.56px;font-size:18.2px;color:#4f4f4f;">522,367.28</div>
<div class="t" style="left:495.00px;width:1200px;text-align:right;top:601.56px;font-size:18.2px;color:#4f4f4f;">470,130.55</div>
<div class="t" style="left:735.20px;width:1200px;text-align:right;top:601.56px;font-size:18.2px;color:#4f4f4f;">940,261.10</div>
<div class="t" style="left:820.50px;width:1200px;text-align:right;top:601.56px;font-size:18.2px;color:#4f4f4f;">80.00</div>
<div class="r" style="left:2062.6px;top:600.65px;width:21px;height:21px;border:2.3px solid #6a6a6a;border-radius:3.5px;box-sizing:border-box"></div>
<svg class="s" style="left:2142.00px;top:597.95px;" width="26" height="25" viewBox="0 0 26 25"><path d="M3 4.2 Q3 2 5.2 2 H13.5 L23.4 12 L13.6 22.2 L3 11.8 Z" fill="none" stroke="#666" stroke-width="2.4" stroke-linejoin="round"/><circle cx="8.5" cy="7.6" r="1.7" fill="#666"/></svg>
<svg class="s" style="left:2174.00px;top:599.25px;" width="22" height="23" viewBox="0 0 22 23"><path d="M4.3 2 H17.5 Q19.8 2 19.8 4.3 V14 L13.5 20.4 H4.3 Q2 20.4 2 18.1 V4.3 Q2 2 4.3 2 Z" fill="none" stroke="#666" stroke-width="2.4" stroke-linejoin="round"/><path d="M13.8 20 V16 Q13.8 14.3 15.5 14.3 H19.5" fill="none" stroke="#666" stroke-width="1.8"/></svg>
<div class="r" style="left:2205.8px;top:598.45px;width:16px;height:24px;background:#e0716c;border-radius:2.5px"></div>
<div class="r" style="left:2209px;top:601.95px;width:10px;height:4px;background:#f6d0ce"></div>
<div class="r" style="left:-14.00px;top:635.50px;width:2244.00px;height:70.50px;background:#ffffff;"></div>
<div class="r" style="left:58.80px;top:635.50px;width:1.40px;height:70.50px;background:#ebebeb;"></div>
<div class="r" style="left:751.80px;top:635.50px;width:1.40px;height:70.50px;background:#ebebeb;"></div>
<div class="r" style="left:879.80px;top:635.50px;width:1.40px;height:70.50px;background:#ebebeb;"></div>
<div class="r" style="left:1042.30px;top:635.50px;width:1.40px;height:70.50px;background:#ebebeb;"></div>
<div class="r" style="left:1246.30px;top:635.50px;width:1.40px;height:70.50px;background:#ebebeb;"></div>
<div class="r" style="left:1484.30px;top:635.50px;width:1.40px;height:70.50px;background:#ebebeb;"></div>
<div class="r" style="left:1706.30px;top:635.50px;width:1.40px;height:70.50px;background:#ebebeb;"></div>
<div class="r" style="left:1946.30px;top:635.50px;width:1.40px;height:70.50px;background:#ebebeb;"></div>
<div class="r" style="left:2032.30px;top:635.50px;width:1.40px;height:70.50px;background:#ebebeb;"></div>
<div class="r" style="left:2111.30px;top:635.50px;width:1.40px;height:70.50px;background:#ebebeb;"></div>
<div class="r" style="left:-14.00px;top:705.20px;width:2244.00px;height:1.60px;background:#e6e6e6;"></div>
<div class="t" style="left:93.50px;top:650.46px;font-size:18.5px;color:#4f4f4f;">Contractor's facilities - On-going cost - establishment and demobilisation -</div>
<div class="t" style="left:93.50px;top:672.96px;font-size:18.5px;color:#4f4f4f;">Option 1</div>
<div class="t" style="left:-332.50px;width:1200px;text-align:right;top:661.56px;font-size:18.2px;color:#4f4f4f;">1.00</div>
<div class="t" style="left:890.50px;top:650.95px;font-size:17.5px;color:#4f4f4f;">LS</div>
<div class="t" style="left:34.80px;width:1200px;text-align:right;top:661.56px;font-size:18.2px;color:#4f4f4f;">591,172.23</div>
<div class="t" style="left:273.00px;width:1200px;text-align:right;top:661.56px;font-size:18.2px;color:#4f4f4f;">591,172.23</div>
<div class="t" style="left:495.00px;width:1200px;text-align:right;top:661.56px;font-size:18.2px;color:#4f4f4f;">1,064,110.01</div>
<div class="t" style="left:735.20px;width:1200px;text-align:right;top:661.56px;font-size:18.2px;color:#4f4f4f;">1,064,110.01</div>
<div class="t" style="left:820.50px;width:1200px;text-align:right;top:661.56px;font-size:18.2px;color:#4f4f4f;">80.00</div>
<div class="r" style="left:2062.6px;top:660.65px;width:21px;height:21px;border:2.3px solid #6a6a6a;border-radius:3.5px;box-sizing:border-box"></div>
<svg class="s" style="left:2142.00px;top:657.95px;" width="26" height="25" viewBox="0 0 26 25"><path d="M3 4.2 Q3 2 5.2 2 H13.5 L23.4 12 L13.6 22.2 L3 11.8 Z" fill="none" stroke="#666" stroke-width="2.4" stroke-linejoin="round"/><circle cx="8.5" cy="7.6" r="1.7" fill="#666"/></svg>
<svg class="s" style="left:2174.00px;top:659.25px;" width="22" height="23" viewBox="0 0 22 23"><path d="M4.3 2 H17.5 Q19.8 2 19.8 4.3 V14 L13.5 20.4 H4.3 Q2 20.4 2 18.1 V4.3 Q2 2 4.3 2 Z" fill="none" stroke="#666" stroke-width="2.4" stroke-linejoin="round"/><path d="M13.8 20 V16 Q13.8 14.3 15.5 14.3 H19.5" fill="none" stroke="#666" stroke-width="1.8"/></svg>
<div class="r" style="left:2205.8px;top:658.45px;width:16px;height:24px;background:#e0716c;border-radius:2.5px"></div>
<div class="r" style="left:2209px;top:661.95px;width:10px;height:4px;background:#f6d0ce"></div>
<div class="r" style="left:-14.00px;top:706.00px;width:2244.00px;height:69.00px;background:#ffffff;"></div>
<div class="r" style="left:58.80px;top:706.00px;width:1.40px;height:69.00px;background:#ebebeb;"></div>
<div class="r" style="left:751.80px;top:706.00px;width:1.40px;height:69.00px;background:#ebebeb;"></div>
<div class="r" style="left:879.80px;top:706.00px;width:1.40px;height:69.00px;background:#ebebeb;"></div>
<div class="r" style="left:1042.30px;top:706.00px;width:1.40px;height:69.00px;background:#ebebeb;"></div>
<div class="r" style="left:1246.30px;top:706.00px;width:1.40px;height:69.00px;background:#ebebeb;"></div>
<div class="r" style="left:1484.30px;top:706.00px;width:1.40px;height:69.00px;background:#ebebeb;"></div>
<div class="r" style="left:1706.30px;top:706.00px;width:1.40px;height:69.00px;background:#ebebeb;"></div>
<div class="r" style="left:1946.30px;top:706.00px;width:1.40px;height:69.00px;background:#ebebeb;"></div>
<div class="r" style="left:2032.30px;top:706.00px;width:1.40px;height:69.00px;background:#ebebeb;"></div>
<div class="r" style="left:2111.30px;top:706.00px;width:1.40px;height:69.00px;background:#ebebeb;"></div>
<div class="r" style="left:-14.00px;top:774.20px;width:2244.00px;height:1.60px;background:#e6e6e6;"></div>
<div class="t" style="left:93.50px;top:720.96px;font-size:18.5px;color:#4f4f4f;">Contractor's facilities - On-going cost - establishment and demobilisation -</div>
<div class="t" style="left:93.50px;top:743.46px;font-size:18.5px;color:#4f4f4f;">Option 2</div>
<div class="t" style="left:-332.50px;width:1200px;text-align:right;top:731.31px;font-size:18.2px;color:#4f4f4f;">1.00</div>
<div class="t" style="left:890.50px;top:721.45px;font-size:17.5px;color:#4f4f4f;">LS</div>
<div class="t" style="left:34.80px;width:1200px;text-align:right;top:731.31px;font-size:18.2px;color:#4f4f4f;">25,549.31</div>
<div class="t" style="left:273.00px;width:1200px;text-align:right;top:731.31px;font-size:18.2px;color:#4f4f4f;">25,549.31</div>
<div class="t" style="left:495.00px;width:1200px;text-align:right;top:731.31px;font-size:18.2px;color:#4f4f4f;">45,988.76</div>
<div class="t" style="left:735.20px;width:1200px;text-align:right;top:731.31px;font-size:18.2px;color:#4f4f4f;">45,988.76</div>
<div class="t" style="left:820.50px;width:1200px;text-align:right;top:731.31px;font-size:18.2px;color:#4f4f4f;">80.00</div>
<div class="r" style="left:2062.6px;top:730.40px;width:21px;height:21px;border:2.3px solid #6a6a6a;border-radius:3.5px;box-sizing:border-box"></div>
<svg class="s" style="left:2142.00px;top:727.70px;" width="26" height="25" viewBox="0 0 26 25"><path d="M3 4.2 Q3 2 5.2 2 H13.5 L23.4 12 L13.6 22.2 L3 11.8 Z" fill="none" stroke="#666" stroke-width="2.4" stroke-linejoin="round"/><circle cx="8.5" cy="7.6" r="1.7" fill="#666"/></svg>
<svg class="s" style="left:2174.00px;top:729.00px;" width="22" height="23" viewBox="0 0 22 23"><path d="M4.3 2 H17.5 Q19.8 2 19.8 4.3 V14 L13.5 20.4 H4.3 Q2 20.4 2 18.1 V4.3 Q2 2 4.3 2 Z" fill="none" stroke="#666" stroke-width="2.4" stroke-linejoin="round"/><path d="M13.8 20 V16 Q13.8 14.3 15.5 14.3 H19.5" fill="none" stroke="#666" stroke-width="1.8"/></svg>
<div class="r" style="left:2205.8px;top:728.20px;width:16px;height:24px;background:#e0716c;border-radius:2.5px"></div>
<div class="r" style="left:2209px;top:731.70px;width:10px;height:4px;background:#f6d0ce"></div>
<div class="r" style="left:-14.00px;top:775.00px;width:2244.00px;height:48.70px;background:#ffffff;"></div>
<div class="r" style="left:58.80px;top:775.00px;width:1.40px;height:48.70px;background:#ebebeb;"></div>
<div class="r" style="left:751.80px;top:775.00px;width:1.40px;height:48.70px;background:#ebebeb;"></div>
<div class="r" style="left:879.80px;top:775.00px;width:1.40px;height:48.70px;background:#ebebeb;"></div>
<div class="r" style="left:1042.30px;top:775.00px;width:1.40px;height:48.70px;background:#ebebeb;"></div>
<div class="r" style="left:1246.30px;top:775.00px;width:1.40px;height:48.70px;background:#ebebeb;"></div>
<div class="r" style="left:1484.30px;top:775.00px;width:1.40px;height:48.70px;background:#ebebeb;"></div>
<div class="r" style="left:1706.30px;top:775.00px;width:1.40px;height:48.70px;background:#ebebeb;"></div>
<div class="r" style="left:1946.30px;top:775.00px;width:1.40px;height:48.70px;background:#ebebeb;"></div>
<div class="r" style="left:2032.30px;top:775.00px;width:1.40px;height:48.70px;background:#ebebeb;"></div>
<div class="r" style="left:2111.30px;top:775.00px;width:1.40px;height:48.70px;background:#ebebeb;"></div>
<div class="r" style="left:-14.00px;top:822.90px;width:2244.00px;height:1.60px;background:#e6e6e6;"></div>
<div class="t" style="left:93.50px;top:789.01px;font-size:18.5px;color:#4f4f4f;">Traffic management</div>
<div class="t" style="left:-332.50px;width:1200px;text-align:right;top:790.16px;font-size:18.2px;color:#4f4f4f;">1.00</div>
<div class="t" style="left:890.50px;top:790.50px;font-size:17.5px;color:#4f4f4f;">LS</div>
<div class="t" style="left:34.80px;width:1200px;text-align:right;top:790.16px;font-size:18.2px;color:#4f4f4f;">37,422.61</div>
<div class="t" style="left:273.00px;width:1200px;text-align:right;top:790.16px;font-size:18.2px;color:#4f4f4f;">37,422.61</div>
<div class="t" style="left:495.00px;width:1200px;text-align:right;top:790.16px;font-size:18.2px;color:#4f4f4f;">67,360.69</div>
<div class="t" style="left:735.20px;width:1200px;text-align:right;top:790.16px;font-size:18.2px;color:#4f4f4f;">67,360.69</div>
<div class="t" style="left:820.50px;width:1200px;text-align:right;top:790.16px;font-size:18.2px;color:#4f4f4f;">80.00</div>
<div class="r" style="left:2062.6px;top:789.25px;width:21px;height:21px;border:2.3px solid #6a6a6a;border-radius:3.5px;box-sizing:border-box"></div>
<svg class="s" style="left:2142.00px;top:786.55px;" width="26" height="25" viewBox="0 0 26 25"><path d="M3 4.2 Q3 2 5.2 2 H13.5 L23.4 12 L13.6 22.2 L3 11.8 Z" fill="none" stroke="#666" stroke-width="2.4" stroke-linejoin="round"/><circle cx="8.5" cy="7.6" r="1.7" fill="#666"/></svg>
<svg class="s" style="left:2174.00px;top:787.85px;" width="22" height="23" viewBox="0 0 22 23"><path d="M4.3 2 H17.5 Q19.8 2 19.8 4.3 V14 L13.5 20.4 H4.3 Q2 20.4 2 18.1 V4.3 Q2 2 4.3 2 Z" fill="none" stroke="#666" stroke-width="2.4" stroke-linejoin="round"/><path d="M13.8 20 V16 Q13.8 14.3 15.5 14.3 H19.5" fill="none" stroke="#666" stroke-width="1.8"/></svg>
<div class="r" style="left:2205.8px;top:787.05px;width:16px;height:24px;background:#e0716c;border-radius:2.5px"></div>
<div class="r" style="left:2209px;top:790.55px;width:10px;height:4px;background:#f6d0ce"></div>
<div class="r" style="left:-14.00px;top:823.70px;width:2244.00px;height:50.10px;background:#fdedeb;"></div>
<div class="r" style="left:-14.00px;top:872.80px;width:2244.00px;height:2.00px;background:rgba(0,0,0,0.03);"></div>
<div class="r" style="left:58.90px;top:823.70px;width:1.20px;height:50.10px;background:rgba(0,0,0,0.015);"></div>
<div class="r" style="left:751.90px;top:823.70px;width:1.20px;height:50.10px;background:rgba(0,0,0,0.015);"></div>
<div class="r" style="left:879.90px;top:823.70px;width:1.20px;height:50.10px;background:rgba(0,0,0,0.015);"></div>
<div class="r" style="left:1042.40px;top:823.70px;width:1.20px;height:50.10px;background:rgba(0,0,0,0.015);"></div>
<div class="r" style="left:1246.40px;top:823.70px;width:1.20px;height:50.10px;background:rgba(0,0,0,0.015);"></div>
<div class="r" style="left:1484.40px;top:823.70px;width:1.20px;height:50.10px;background:rgba(0,0,0,0.015);"></div>
<div class="r" style="left:1706.40px;top:823.70px;width:1.20px;height:50.10px;background:rgba(0,0,0,0.015);"></div>
<div class="r" style="left:1946.40px;top:823.70px;width:1.20px;height:50.10px;background:rgba(0,0,0,0.015);"></div>
<div class="r" style="left:2032.40px;top:823.70px;width:1.20px;height:50.10px;background:rgba(0,0,0,0.015);"></div>
<div class="r" style="left:2111.40px;top:823.70px;width:1.20px;height:50.10px;background:rgba(0,0,0,0.015);"></div>
<div class="t" style="left:79.40px;top:838.51px;font-size:18.3px;color:#d26d66;font-weight:bold;text-decoration:underline;text-underline-offset:2.3px;text-decoration-thickness:1.2px;transform:scaleX(0.9497);transform-origin:0 50%;">ENVIRONMENTAL</div>
<div class="t" style="left:35.10px;width:1200px;text-align:right;top:839.56px;font-size:18.2px;color:#d26d66;font-weight:bold;text-decoration:underline;text-underline-offset:2.3px;text-decoration-thickness:1.2px;letter-spacing:0.3px;">1.24%</div>
<div class="t" style="left:273.30px;width:1200px;text-align:right;top:839.56px;font-size:18.2px;color:#d26d66;font-weight:bold;text-decoration:underline;text-underline-offset:2.3px;text-decoration-thickness:1.2px;letter-spacing:0.3px;">41,396.50</div>
<div class="t" style="left:495.30px;width:1200px;text-align:right;top:839.56px;font-size:18.2px;color:#d26d66;font-weight:bold;text-decoration:underline;text-underline-offset:2.3px;text-decoration-thickness:1.2px;letter-spacing:0.3px;">1.24%</div>
<div class="t" style="left:735.50px;width:1200px;text-align:right;top:839.56px;font-size:18.2px;color:#d26d66;font-weight:bold;text-decoration:underline;text-underline-offset:2.3px;text-decoration-thickness:1.2px;letter-spacing:0.3px;">74,513.23</div>
<div class="t" style="left:820.80px;width:1200px;text-align:right;top:839.56px;font-size:18.2px;color:#d26d66;font-weight:bold;text-decoration:underline;text-underline-offset:2.3px;text-decoration-thickness:1.2px;letter-spacing:0.3px;">80.00</div>
<div class="r" style="left:2062.6px;top:838.65px;width:21px;height:21px;border:2.3px solid #6a6a6a;border-radius:3.5px;box-sizing:border-box"></div>
<svg class="s" style="left:2151.00px;top:835.95px;" width="26" height="25" viewBox="0 0 26 25"><path d="M3 4.2 Q3 2 5.2 2 H13.5 L23.4 12 L13.6 22.2 L3 11.8 Z" fill="none" stroke="#666" stroke-width="2.4" stroke-linejoin="round"/><circle cx="8.5" cy="7.6" r="1.7" fill="#666"/></svg>
<svg class="s" style="left:2183.00px;top:837.25px;" width="22" height="23" viewBox="0 0 22 23"><path d="M4.3 2 H17.5 Q19.8 2 19.8 4.3 V14 L13.5 20.4 H4.3 Q2 20.4 2 18.1 V4.3 Q2 2 4.3 2 Z" fill="none" stroke="#666" stroke-width="2.4" stroke-linejoin="round"/><path d="M13.8 20 V16 Q13.8 14.3 15.5 14.3 H19.5" fill="none" stroke="#666" stroke-width="1.8"/></svg>
<div class="r" style="left:-14.00px;top:873.80px;width:2244.00px;height:49.50px;background:#e3f4e8;"></div>
<div class="r" style="left:-14.00px;top:922.30px;width:2244.00px;height:2.00px;background:rgba(0,0,0,0.03);"></div>
<div class="r" style="left:58.90px;top:873.80px;width:1.20px;height:49.50px;background:rgba(0,0,0,0.015);"></div>
<div class="r" style="left:751.90px;top:873.80px;width:1.20px;height:49.50px;background:rgba(0,0,0,0.015);"></div>
<div class="r" style="left:879.90px;top:873.80px;width:1.20px;height:49.50px;background:rgba(0,0,0,0.015);"></div>
<div class="r" style="left:1042.40px;top:873.80px;width:1.20px;height:49.50px;background:rgba(0,0,0,0.015);"></div>
<div class="r" style="left:1246.40px;top:873.80px;width:1.20px;height:49.50px;background:rgba(0,0,0,0.015);"></div>
<div class="r" style="left:1484.40px;top:873.80px;width:1.20px;height:49.50px;background:rgba(0,0,0,0.015);"></div>
<div class="r" style="left:1706.40px;top:873.80px;width:1.20px;height:49.50px;background:rgba(0,0,0,0.015);"></div>
<div class="r" style="left:1946.40px;top:873.80px;width:1.20px;height:49.50px;background:rgba(0,0,0,0.015);"></div>
<div class="r" style="left:2032.40px;top:873.80px;width:1.20px;height:49.50px;background:rgba(0,0,0,0.015);"></div>
<div class="r" style="left:2111.40px;top:873.80px;width:1.20px;height:49.50px;background:rgba(0,0,0,0.015);"></div>
<div class="t" style="left:86.50px;top:888.31px;font-size:18.3px;color:#34935c;font-weight:bold;transform:scaleX(0.9535);transform-origin:0 50%;">New Task</div>
<div class="t" style="left:35.10px;width:1200px;text-align:right;top:889.36px;font-size:18.2px;color:#34935c;font-weight:bold;letter-spacing:0.3px;">1.24%</div>
<div class="t" style="left:273.30px;width:1200px;text-align:right;top:889.36px;font-size:18.2px;color:#34935c;font-weight:bold;letter-spacing:0.3px;">41,396.50</div>
<div class="t" style="left:495.30px;width:1200px;text-align:right;top:889.36px;font-size:18.2px;color:#34935c;font-weight:bold;letter-spacing:0.3px;">1.24%</div>
<div class="t" style="left:735.50px;width:1200px;text-align:right;top:889.36px;font-size:18.2px;color:#34935c;font-weight:bold;letter-spacing:0.3px;">74,513.23</div>
<div class="t" style="left:820.80px;width:1200px;text-align:right;top:889.36px;font-size:18.2px;color:#34935c;font-weight:bold;letter-spacing:0.3px;">80.00</div>
<div class="r" style="left:2062.6px;top:888.45px;width:21px;height:21px;border:2.3px solid #6a6a6a;border-radius:3.5px;box-sizing:border-box"></div>
<svg class="s" style="left:2151.00px;top:885.75px;" width="26" height="25" viewBox="0 0 26 25"><path d="M3 4.2 Q3 2 5.2 2 H13.5 L23.4 12 L13.6 22.2 L3 11.8 Z" fill="none" stroke="#666" stroke-width="2.4" stroke-linejoin="round"/><circle cx="8.5" cy="7.6" r="1.7" fill="#666"/></svg>
<svg class="s" style="left:2183.00px;top:887.05px;" width="22" height="23" viewBox="0 0 22 23"><path d="M4.3 2 H17.5 Q19.8 2 19.8 4.3 V14 L13.5 20.4 H4.3 Q2 20.4 2 18.1 V4.3 Q2 2 4.3 2 Z" fill="none" stroke="#666" stroke-width="2.4" stroke-linejoin="round"/><path d="M13.8 20 V16 Q13.8 14.3 15.5 14.3 H19.5" fill="none" stroke="#666" stroke-width="1.8"/></svg>
<div class="r" style="left:-14.00px;top:923.30px;width:2244.00px;height:49.50px;background:#ffffff;"></div>
<div class="r" style="left:58.80px;top:923.30px;width:1.40px;height:49.50px;background:#ebebeb;"></div>
<div class="r" style="left:751.80px;top:923.30px;width:1.40px;height:49.50px;background:#ebebeb;"></div>
<div class="r" style="left:879.80px;top:923.30px;width:1.40px;height:49.50px;background:#ebebeb;"></div>
<div class="r" style="left:1042.30px;top:923.30px;width:1.40px;height:49.50px;background:#ebebeb;"></div>
<div class="r" style="left:1246.30px;top:923.30px;width:1.40px;height:49.50px;background:#ebebeb;"></div>
<div class="r" style="left:1484.30px;top:923.30px;width:1.40px;height:49.50px;background:#ebebeb;"></div>
<div class="r" style="left:1706.30px;top:923.30px;width:1.40px;height:49.50px;background:#ebebeb;"></div>
<div class="r" style="left:1946.30px;top:923.30px;width:1.40px;height:49.50px;background:#ebebeb;"></div>
<div class="r" style="left:2032.30px;top:923.30px;width:1.40px;height:49.50px;background:#ebebeb;"></div>
<div class="r" style="left:2111.30px;top:923.30px;width:1.40px;height:49.50px;background:#ebebeb;"></div>
<div class="r" style="left:-14.00px;top:972.00px;width:2244.00px;height:1.60px;background:#e6e6e6;"></div>
<div class="t" style="left:93.50px;top:937.71px;font-size:18.5px;color:#4f4f4f;">Silt Pond</div>
<div class="t" style="left:-332.50px;width:1200px;text-align:right;top:938.86px;font-size:18.2px;color:#4f4f4f;">1.00</div>
<div class="t" style="left:890.50px;top:939.20px;font-size:17.5px;color:#4f4f4f;">No.</div>
<div class="t" style="left:34.80px;width:1200px;text-align:right;top:938.86px;font-size:18.2px;color:#4f4f4f;">29,739.68</div>
<div class="t" style="left:273.00px;width:1200px;text-align:right;top:938.86px;font-size:18.2px;color:#4f4f4f;">29,739.68</div>
<div class="t" style="left:495.00px;width:1200px;text-align:right;top:938.86px;font-size:18.2px;color:#4f4f4f;">53,531.42</div>
<div class="t" style="left:735.20px;width:1200px;text-align:right;top:938.86px;font-size:18.2px;color:#4f4f4f;">53,531.42</div>
<div class="t" style="left:820.50px;width:1200px;text-align:right;top:938.86px;font-size:18.2px;color:#4f4f4f;">80.00</div>
<div class="r" style="left:2062.6px;top:937.95px;width:21px;height:21px;border:2.3px solid #6a6a6a;border-radius:3.5px;box-sizing:border-box"></div>
<svg class="s" style="left:2142.00px;top:935.25px;" width="26" height="25" viewBox="0 0 26 25"><path d="M3 4.2 Q3 2 5.2 2 H13.5 L23.4 12 L13.6 22.2 L3 11.8 Z" fill="none" stroke="#666" stroke-width="2.4" stroke-linejoin="round"/><circle cx="8.5" cy="7.6" r="1.7" fill="#666"/></svg>
<svg class="s" style="left:2174.00px;top:936.55px;" width="22" height="23" viewBox="0 0 22 23"><path d="M4.3 2 H17.5 Q19.8 2 19.8 4.3 V14 L13.5 20.4 H4.3 Q2 20.4 2 18.1 V4.3 Q2 2 4.3 2 Z" fill="none" stroke="#666" stroke-width="2.4" stroke-linejoin="round"/><path d="M13.8 20 V16 Q13.8 14.3 15.5 14.3 H19.5" fill="none" stroke="#666" stroke-width="1.8"/></svg>
<div class="r" style="left:2205.8px;top:935.75px;width:16px;height:24px;background:#e0716c;border-radius:2.5px"></div>
<div class="r" style="left:2209px;top:939.25px;width:10px;height:4px;background:#f6d0ce"></div>
<div class="r" style="left:-14.00px;top:972.80px;width:2244.00px;height:49.20px;background:#ffffff;"></div>
<div class="r" style="left:58.80px;top:972.80px;width:1.40px;height:49.20px;background:#ebebeb;"></div>
<div class="r" style="left:751.80px;top:972.80px;width:1.40px;height:49.20px;background:#ebebeb;"></div>
<div class="r" style="left:879.80px;top:972.80px;width:1.40px;height:49.20px;background:#ebebeb;"></div>
<div class="r" style="left:1042.30px;top:972.80px;width:1.40px;height:49.20px;background:#ebebeb;"></div>
<div class="r" style="left:1246.30px;top:972.80px;width:1.40px;height:49.20px;background:#ebebeb;"></div>
<div class="r" style="left:1484.30px;top:972.80px;width:1.40px;height:49.20px;background:#ebebeb;"></div>
<div class="r" style="left:1706.30px;top:972.80px;width:1.40px;height:49.20px;background:#ebebeb;"></div>
<div class="r" style="left:1946.30px;top:972.80px;width:1.40px;height:49.20px;background:#ebebeb;"></div>
<div class="r" style="left:2032.30px;top:972.80px;width:1.40px;height:49.20px;background:#ebebeb;"></div>
<div class="r" style="left:2111.30px;top:972.80px;width:1.40px;height:49.20px;background:#ebebeb;"></div>
<div class="r" style="left:-14.00px;top:1021.20px;width:2244.00px;height:1.60px;background:#e6e6e6;"></div>
<div class="t" style="left:93.50px;top:987.06px;font-size:18.5px;color:#4f4f4f;">Silt Fence</div>
<div class="t" style="left:-332.50px;width:1200px;text-align:right;top:988.21px;font-size:18.2px;color:#4f4f4f;">138.00</div>
<div class="t" style="left:890.50px;top:988.55px;font-size:17.5px;color:#4f4f4f;">m</div>
<div class="t" style="left:34.80px;width:1200px;text-align:right;top:988.21px;font-size:18.2px;color:#4f4f4f;">24.37</div>
<div class="t" style="left:273.00px;width:1200px;text-align:right;top:988.21px;font-size:18.2px;color:#4f4f4f;">3,362.38</div>
<div class="t" style="left:495.00px;width:1200px;text-align:right;top:988.21px;font-size:18.2px;color:#4f4f4f;">43.86</div>
<div class="t" style="left:735.20px;width:1200px;text-align:right;top:988.21px;font-size:18.2px;color:#4f4f4f;">6,052.68</div>
<div class="t" style="left:820.50px;width:1200px;text-align:right;top:988.21px;font-size:18.2px;color:#4f4f4f;">80.00</div>
<div class="r" style="left:2062.6px;top:987.30px;width:21px;height:21px;border:2.3px solid #6a6a6a;border-radius:3.5px;box-sizing:border-box"></div>
<svg class="s" style="left:2142.00px;top:984.60px;" width="26" height="25" viewBox="0 0 26 25"><path d="M3 4.2 Q3 2 5.2 2 H13.5 L23.4 12 L13.6 22.2 L3 11.8 Z" fill="none" stroke="#666" stroke-width="2.4" stroke-linejoin="round"/><circle cx="8.5" cy="7.6" r="1.7" fill="#666"/></svg>
<svg class="s" style="left:2174.00px;top:985.90px;" width="22" height="23" viewBox="0 0 22 23"><path d="M4.3 2 H17.5 Q19.8 2 19.8 4.3 V14 L13.5 20.4 H4.3 Q2 20.4 2 18.1 V4.3 Q2 2 4.3 2 Z" fill="none" stroke="#666" stroke-width="2.4" stroke-linejoin="round"/><path d="M13.8 20 V16 Q13.8 14.3 15.5 14.3 H19.5" fill="none" stroke="#666" stroke-width="1.8"/></svg>
<div class="r" style="left:2205.8px;top:985.10px;width:16px;height:24px;background:#e0716c;border-radius:2.5px"></div>
<div class="r" style="left:2209px;top:988.60px;width:10px;height:4px;background:#f6d0ce"></div>
<div class="r" style="left:-14.00px;top:1022.00px;width:2244.00px;height:49.50px;background:#ffffff;"></div>
<div class="r" style="left:58.80px;top:1022.00px;width:1.40px;height:49.50px;background:#ebebeb;"></div>
<div class="r" style="left:751.80px;top:1022.00px;width:1.40px;height:49.50px;background:#ebebeb;"></div>
<div class="r" style="left:879.80px;top:1022.00px;width:1.40px;height:49.50px;background:#ebebeb;"></div>
<div class="r" style="left:1042.30px;top:1022.00px;width:1.40px;height:49.50px;background:#ebebeb;"></div>
<div class="r" style="left:1246.30px;top:1022.00px;width:1.40px;height:49.50px;background:#ebebeb;"></div>
<div class="r" style="left:1484.30px;top:1022.00px;width:1.40px;height:49.50px;background:#ebebeb;"></div>
<div class="r" style="left:1706.30px;top:1022.00px;width:1.40px;height:49.50px;background:#ebebeb;"></div>
<div class="r" style="left:1946.30px;top:1022.00px;width:1.40px;height:49.50px;background:#ebebeb;"></div>
<div class="r" style="left:2032.30px;top:1022.00px;width:1.40px;height:49.50px;background:#ebebeb;"></div>
<div class="r" style="left:2111.30px;top:1022.00px;width:1.40px;height:49.50px;background:#ebebeb;"></div>
<div class="r" style="left:-14.00px;top:1070.70px;width:2244.00px;height:1.60px;background:#e6e6e6;"></div>
<div class="t" style="left:93.50px;top:1036.41px;font-size:18.5px;color:#4f4f4f;">Clean Water Diversion Bund</div>
<div class="t" style="left:-332.50px;width:1200px;text-align:right;top:1037.56px;font-size:18.2px;color:#4f4f4f;">99.29</div>
<div class="t" style="left:890.50px;top:1037.90px;font-size:17.5px;color:#4f4f4f;">m</div>
<div class="t" style="left:34.80px;width:1200px;text-align:right;top:1037.56px;font-size:18.2px;color:#4f4f4f;">10.24</div>
<div class="t" style="left:273.00px;width:1200px;text-align:right;top:1037.56px;font-size:18.2px;color:#4f4f4f;">1,016.83</div>
<div class="t" style="left:495.00px;width:1200px;text-align:right;top:1037.56px;font-size:18.2px;color:#4f4f4f;">18.43</div>
<div class="t" style="left:735.20px;width:1200px;text-align:right;top:1037.56px;font-size:18.2px;color:#4f4f4f;">1,829.91</div>
<div class="t" style="left:820.50px;width:1200px;text-align:right;top:1037.56px;font-size:18.2px;color:#4f4f4f;">80.00</div>
<div class="r" style="left:2062.6px;top:1036.65px;width:21px;height:21px;border:2.3px solid #6a6a6a;border-radius:3.5px;box-sizing:border-box"></div>
<svg class="s" style="left:2142.00px;top:1033.95px;" width="26" height="25" viewBox="0 0 26 25"><path d="M3 4.2 Q3 2 5.2 2 H13.5 L23.4 12 L13.6 22.2 L3 11.8 Z" fill="none" stroke="#666" stroke-width="2.4" stroke-linejoin="round"/><circle cx="8.5" cy="7.6" r="1.7" fill="#666"/></svg>
<svg class="s" style="left:2174.00px;top:1035.25px;" width="22" height="23" viewBox="0 0 22 23"><path d="M4.3 2 H17.5 Q19.8 2 19.8 4.3 V14 L13.5 20.4 H4.3 Q2 20.4 2 18.1 V4.3 Q2 2 4.3 2 Z" fill="none" stroke="#666" stroke-width="2.4" stroke-linejoin="round"/><path d="M13.8 20 V16 Q13.8 14.3 15.5 14.3 H19.5" fill="none" stroke="#666" stroke-width="1.8"/></svg>
<div class="r" style="left:2205.8px;top:1034.45px;width:16px;height:24px;background:#e0716c;border-radius:2.5px"></div>
<div class="r" style="left:2209px;top:1037.95px;width:10px;height:4px;background:#f6d0ce"></div>
<div class="r" style="left:-14.00px;top:1071.50px;width:2244.00px;height:49.50px;background:#ffffff;"></div>
<div class="r" style="left:58.80px;top:1071.50px;width:1.40px;height:49.50px;background:#ebebeb;"></div>
<div class="r" style="left:751.80px;top:1071.50px;width:1.40px;height:49.50px;background:#ebebeb;"></div>
<div class="r" style="left:879.80px;top:1071.50px;width:1.40px;height:49.50px;background:#ebebeb;"></div>
<div class="r" style="left:1042.30px;top:1071.50px;width:1.40px;height:49.50px;background:#ebebeb;"></div>
<div class="r" style="left:1246.30px;top:1071.50px;width:1.40px;height:49.50px;background:#ebebeb;"></div>
<div class="r" style="left:1484.30px;top:1071.50px;width:1.40px;height:49.50px;background:#ebebeb;"></div>
<div class="r" style="left:1706.30px;top:1071.50px;width:1.40px;height:49.50px;background:#ebebeb;"></div>
<div class="r" style="left:1946.30px;top:1071.50px;width:1.40px;height:49.50px;background:#ebebeb;"></div>
<div class="r" style="left:2032.30px;top:1071.50px;width:1.40px;height:49.50px;background:#ebebeb;"></div>
<div class="r" style="left:2111.30px;top:1071.50px;width:1.40px;height:49.50px;background:#ebebeb;"></div>
<div class="r" style="left:-14.00px;top:1120.20px;width:2244.00px;height:1.60px;background:#e6e6e6;"></div>
<div class="r" style="left:0.00px;top:288.30px;width:59.50px;height:3.20px;background:#5b7b6b;"></div>
</div></div></body></html>
